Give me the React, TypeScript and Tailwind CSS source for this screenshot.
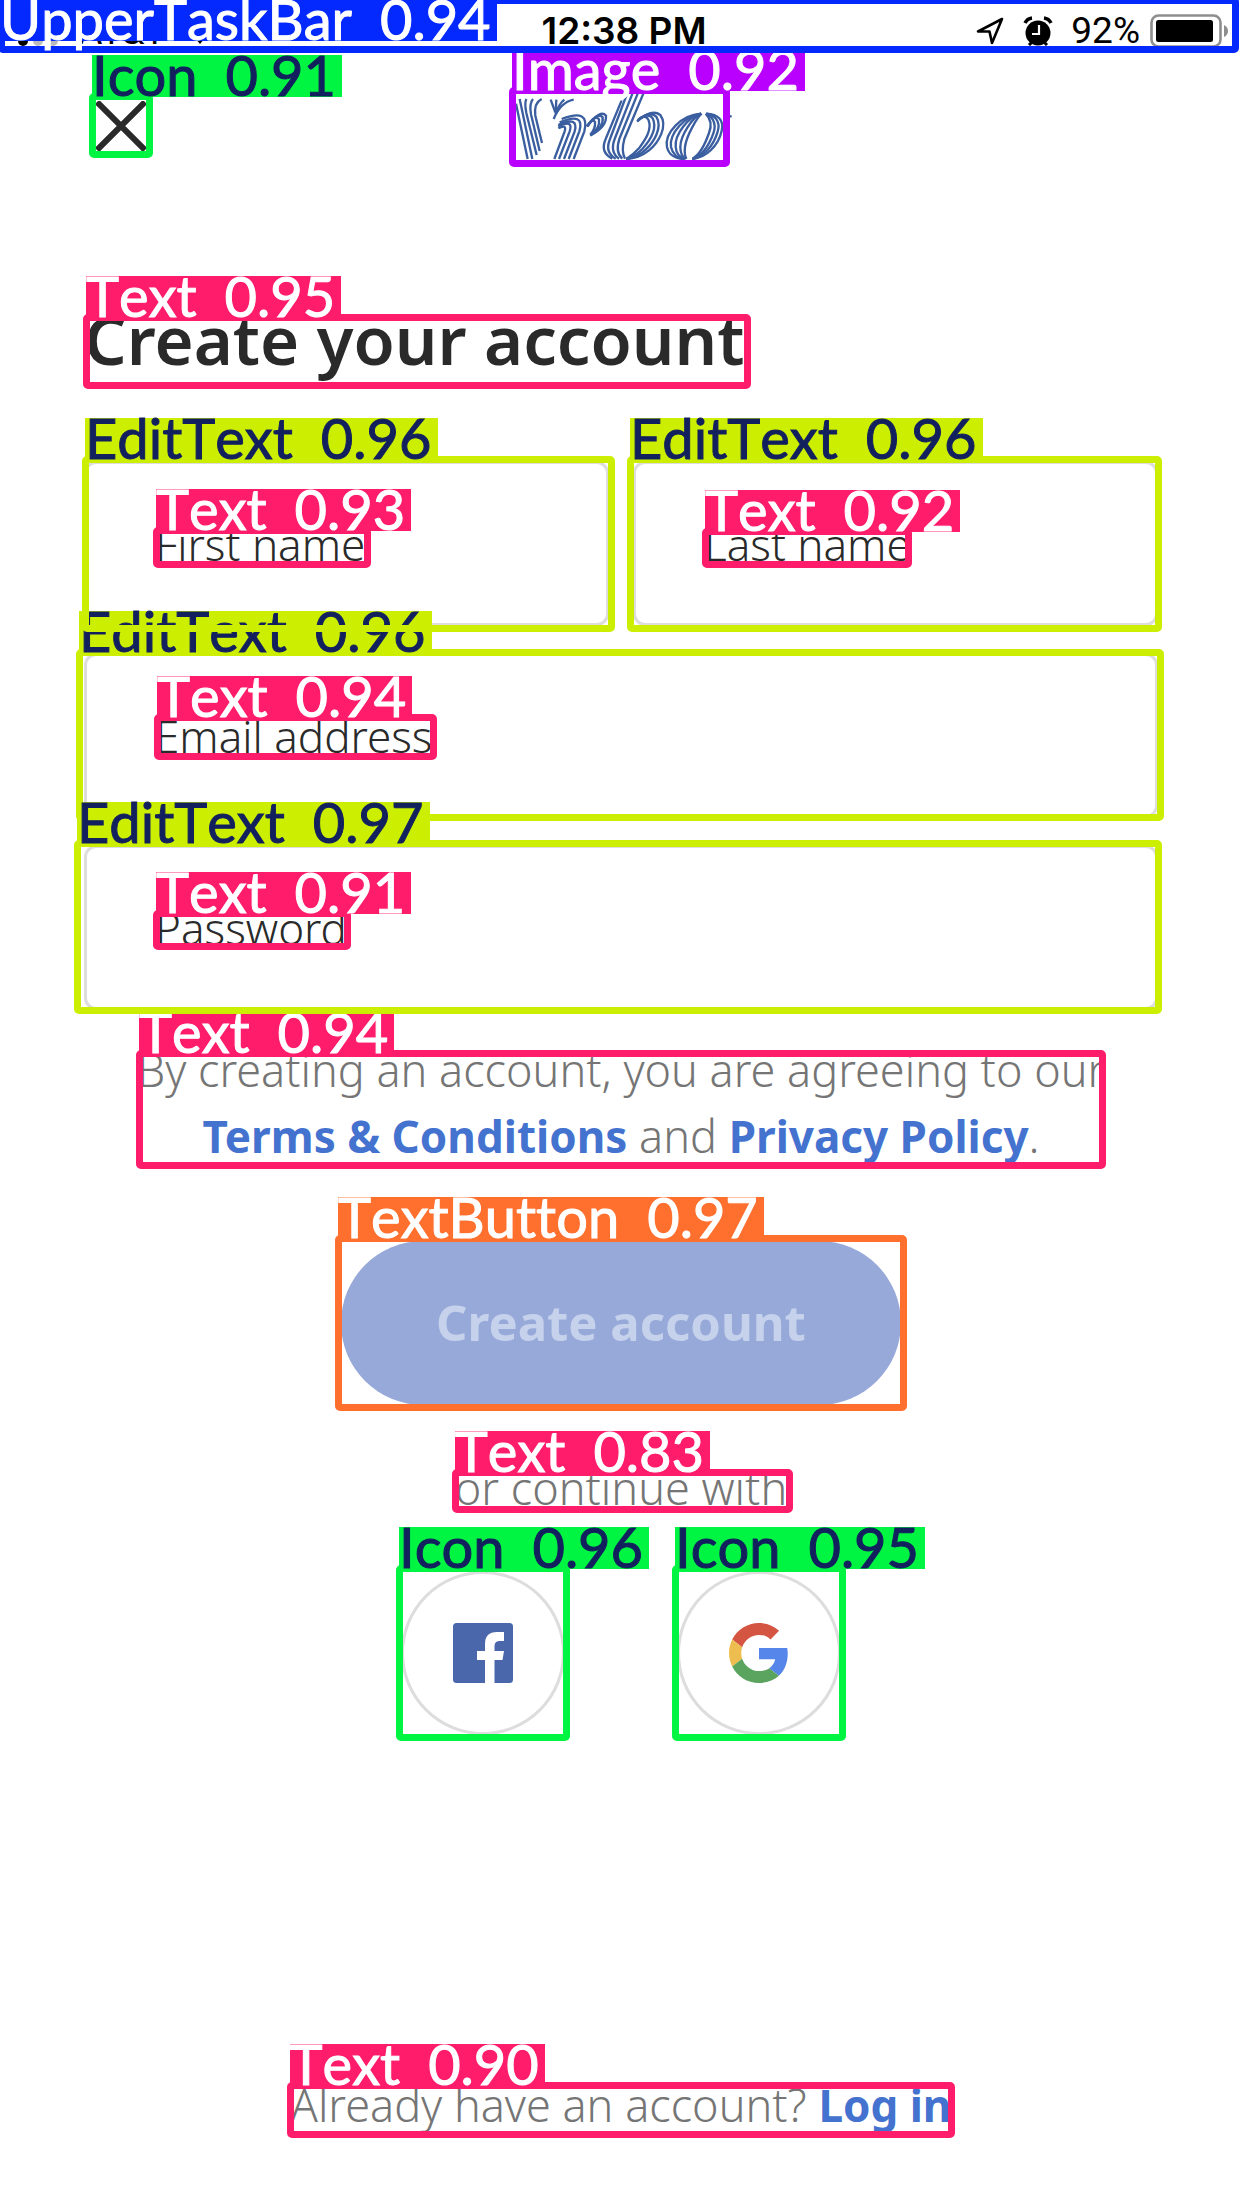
import type { InputHTMLAttributes, ReactNode } from "react";

const tones = {
  blue: { frame: "border-[#0329ff]", label: "bg-[#0329ff] text-white" },
  green: { frame: "border-[#00f442]", label: "bg-[#00f442] text-[#12205e]" },
  purple: { frame: "border-[#b900ff]", label: "bg-[#b900ff] text-white" },
  pink: { frame: "border-[#ff1c6b]", label: "bg-[#ff1c6b] text-white" },
  lime: { frame: "border-[#ccee00]", label: "bg-[#ccee00] text-[#12205e]" },
  orange: { frame: "border-[#ff6f2e]", label: "bg-[#ff6f2e] text-white" },
};

type MarkerProps = {
  kind: string;
  score: string;
  tone: keyof typeof tones;
  className: string;
  labelAt?: string;
};

/* Detection frame with its class name and confidence, laid over the parent element. */
function Marker({ kind, score, tone, className, labelAt = "-left-1 -top-[45px]" }: MarkerProps) {
  return (
    <span className={`pointer-events-none absolute rounded-[5px] border-[7px] ${tones[tone].frame} ${className}`}>
      <span
        className={`absolute flex h-[42px] gap-7 whitespace-nowrap pr-1.5 text-left font-['Lato',sans-serif] text-[56px] font-normal leading-10 [font-kerning:none] [font-variant-ligatures:none] [-webkit-text-stroke:1px_currentColor] ${tones[tone].label} ${labelAt}`}
      >
        <span>{kind}</span>
        <span>{score}</span>
      </span>
    </span>
  );
}

function Field({ children, ...input }: InputHTMLAttributes<HTMLInputElement> & { children: ReactNode }) {
  return (
    <div className="relative">
      <input
        {...input}
        aria-label={input.placeholder}
        className="block h-[165px] w-full rounded-xl border-[3px] border-[#dddddd] bg-white px-[68px] text-[44px] font-[350] text-[#2a2a2a] outline-none placeholder:text-[#2a2a2a] placeholder:opacity-100"
      />
      {children}
    </div>
  );
}

function StatusBar() {
  return (
    <header className="relative flex h-[62px] items-center justify-between pl-[18px] pr-3 font-['Inter',sans-serif] text-[36px] text-black">
      <div className="flex flex-1 items-center gap-4">
        <svg viewBox="0 0 44 12" className="mt-5 h-3 w-11" aria-hidden="true">
          <circle cx="5" cy="6" r="5" fill="#000" />
          <circle cx="20" cy="6" r="5" fill="#bbb" />
          <circle cx="35" cy="6" r="5" fill="#bbb" />
        </svg>
        <span>AT&amp;T</span>
        <svg viewBox="0 0 36 26" className="h-[26px] w-9" aria-hidden="true">
          <path d="M18 26 12 19a9 9 0 0 1 12 0Z" />
          <path d="M7 14a16 16 0 0 1 22 0M2 8a23 23 0 0 1 32 0" fill="none" stroke="#000" strokeWidth="4" />
        </svg>
      </div>
      <time className="text-[37px] font-semibold">12:38 PM</time>
      <div className="flex flex-1 items-center justify-end">
        <svg viewBox="0 0 30 30" className="h-[30px] w-[30px]" aria-hidden="true">
          <path d="M27 3 3 15.500 14.500 15.500 17 27Z" fill="none" stroke="#000" strokeWidth="2.600" strokeLinejoin="round" />
        </svg>
        <svg viewBox="0 0 30 30" className="ml-[18px] h-[30px] w-[30px]" aria-hidden="true">
          <circle cx="15" cy="17" r="12.500" />
          <path d="M2 7a9 9 0 0 1 7-5M28 7a9 9 0 0 0-7-5" fill="none" stroke="#000" strokeWidth="3.500" />
          <path d="M16 9v9H9" fill="none" stroke="#fff" strokeWidth="2.200" />
          <path d="M6 29l4-4M24 29l-4-4" stroke="#000" strokeWidth="3" />
        </svg>
        <span className="ml-[18px] font-['Roboto',sans-serif] text-[37px]">92%</span>
        <svg viewBox="0 0 80 34" className="ml-2.5 h-[34px] w-20" aria-hidden="true">
          <rect x="1.500" y="1.500" width="69" height="31" rx="7" fill="none" stroke="#8e8e8e" strokeWidth="2.600" />
          <rect x="6" y="6" width="57" height="22" rx="2.500" />
          <path d="M74 11q4 2 4 6t-4 6Z" fill="#8e8e8e" />
        </svg>
      </div>
      <Marker
        kind="UpperTaskBar"
        score="0.94"
        tone="blue"
        className="-left-0.5 -top-[3px] bottom-[9px] right-[3px] z-20"
        labelAt="-left-[5px] -top-[5px]"
      />
    </header>
  );
}

const logoStripes = [
  "M33 62 68 228",
  "M44 48 82 228",
  "M64 48Q58 60 64 90L95 216",
  "M84 48Q72 62 78 94L104 204",
  "M110 48Q86 60 91 98L111 180",
  "M137 50 151 88",
  "M154 50 152 90",
  "M178 50Q162 62 152 94",
  "M206 50Q166 58 146 108",
  "M148 228 179 145Q186 122 160 136",
  "M162 228 194 145Q206 108 160 130",
  "M177 228 209 145Q222 98 160 126",
  "M191 228 223 145Q240 86 164 118",
  "M206 228 238 145Q256 74 170 108",
  "M246 130Q286 78 303 98 306 132 256 157",
  "M246 130Q278 86 293 103 297 134 256 157",
  "M246 130Q270 94 282 109 286 136 256 157",
  "M248 130Q262 104 270 117 272 138 256 155",
  "M350 52 302 168Q284 208 322 227",
  "M370 22 315 168Q298 208 332 227",
  "M386 22 329 168Q314 208 342 227",
  "M402 22 343 168Q330 208 352 227",
  "M419 22 358 168Q348 204 360 227",
  "M396 116Q440 76 466 96C490 130 460 180 432 202Q402 226 364 228",
  "M398 112Q434 82 454 101C474 134 446 178 422 200Q398 222 364 228",
  "M400 110Q430 88 443 106C458 138 432 176 412 198Q392 218 364 228",
  "M404 106Q424 94 431 112C442 142 418 174 402 196Q386 214 364 228",
  "M588 92C528 96 478 150 486 192 492 218 510 226 536 228",
  "M588 92C540 98 492 152 498 192 504 218 520 226 538 228",
  "M588 92C552 100 508 154 512 192 514 216 526 224 540 228",
  "M588 92C564 102 526 156 526 192 526 212 532 222 542 228",
  "M590 92C576 104 544 158 540 192 538 210 540 220 544 228",
  "M604 92C640 94 658 112 650 144 640 188 604 224 562 228",
  "M604 92C628 96 648 114 638 146 626 188 596 222 562 228",
  "M604 92C618 98 636 118 626 148 612 190 588 220 562 228",
  "M602 92C610 100 624 120 612 150 598 190 580 218 562 228",
];

function Logo() {
  return (
    <svg viewBox="0 0 696 258" className="h-[86px] w-[232px]" role="img" aria-label="Vrbo">
      <g fill="none" stroke="#3a5e9f" strokeWidth="7">
        {logoStripes.map((d) => (
          <path key={d} d={d} />
        ))}
        <path d="M672 100h8" />
      </g>
    </svg>
  );
}

export default function App() {
  return (
    <div className="flex min-h-screen flex-col overflow-x-hidden bg-white font-['Noto_Sans',sans-serif]">
      <StatusBar />
      <nav className="grid h-32 grid-cols-[1fr_auto_1fr] items-center px-24">
        <button type="button" aria-label="Close" className="relative h-[50px] w-[50px]">
          <svg viewBox="0 0 50 50" className="h-full w-full" aria-hidden="true">
            <path d="M1 1 49 49M49 1 1 49" stroke="#2a2a2a" strokeWidth="6" />
          </svg>
          <Marker kind="Icon" score="0.91" tone="green" className="-left-[7px] -top-2 z-10 h-[65px] w-16" />
        </button>
        <div className="relative">
          <Logo />
          <Marker kind="Image" score="0.92" tone="purple" className="left-1 top-1 z-10 h-20 w-[221px]" />
        </div>
      </nav>

      <main className="px-[84px] pt-[107px]">
        <h1 className="relative text-[67px] font-semibold leading-[84px] text-[#2a2a2a]">
          Create your account
          <Marker kind="Text" score="0.95" tone="pink" className="-left-px top-[17px] h-[75px] w-[668px]" />
        </h1>

        <form className="mt-20 flex flex-col gap-[27px]" onSubmit={(e) => e.preventDefault()}>
          <div className="grid grid-cols-2 gap-6">
            <Field type="text" placeholder="First name">
              <Marker kind="EditText" score="0.96" tone="lime" className="-bottom-1.5 -left-0.5 -right-1.5 -top-[5px] z-20" />
              <Marker kind="Text" score="0.93" tone="pink" className="left-[69px] top-[66px] z-30 h-[41px] w-[218px]" />
            </Field>
            <Field type="text" placeholder="Last name">
              <Marker kind="EditText" score="0.96" tone="lime" className="-bottom-1.5 -left-1.5 -right-1 -top-[5px] z-20" />
              <Marker kind="Text" score="0.92" tone="pink" className="left-[69px] top-[67px] z-30 h-10 w-[210px]" />
            </Field>
          </div>
          <Field type="email" placeholder="Email address">
            <Marker kind="EditText" score="0.96" tone="lime" className="-bottom-[3px] -left-2 -right-1.5 -top-1 z-10" />
            <Marker kind="Text" score="0.94" tone="pink" className="left-[70px] top-[61px] z-30 h-[46px] w-[283px]" />
          </Field>
          <Field type="password" placeholder="Password">
            <Marker kind="EditText" score="0.97" tone="lime" className="-bottom-1 -left-2.5 -right-1 -top-[5px] z-20" />
            <Marker kind="Text" score="0.91" tone="pink" className="left-[69px] top-[65px] z-30 h-10 w-[198px]" />
          </Field>

          <p className="relative text-center text-[45px] font-[350] leading-[66px] text-[#757575]">
            By creating an account, you are agreeing to our
            <br />
            <a href="#terms" className="text-[44px] font-bold text-[#4472cf]">Terms &amp; Conditions</a> and{" "}
            <a href="#privacy" className="text-[44px] font-bold text-[#4472cf]">Privacy Policy</a>.
            <Marker kind="Text" score="0.94" tone="pink" className="bottom-0 left-[52px] right-[52px] top-[13px] z-10" />
          </p>

          <button
            type="submit"
            className="relative mt-[45px] h-[164px] w-[560px] self-center rounded-full bg-[#97a9d9] text-[49px] font-bold text-[#c6d2ec]"
          >
            Create account
            <Marker kind="TextButton" score="0.97" tone="orange" className="-inset-1.5" />
          </button>
        </form>

        <section className="mt-[50px] flex flex-col items-center gap-[50px]">
          <p className="relative text-[45px] font-[350] leading-[66px] text-[#757575]">
            or continue with
            <Marker kind="Text" score="0.83" tone="pink" className="-left-[3px] top-3.5 h-11 w-[341px]" />
          </p>
          <div className="flex gap-28">
            <button type="button" aria-label="Facebook" className="relative flex h-[164px] w-[164px] items-center justify-center rounded-full border-[3px] border-[#dddddd]">
              <svg viewBox="0 0 60 60" className="h-[60px] w-[60px]" aria-hidden="true">
                <rect width="60" height="60" rx="3.500" fill="#4a67ab" />
                <path d="M32 60V37H24V28H32V21Q32 9 44 9H51V18H47Q41.500 18 41.500 23V28H51L49.500 37H41.500V60Z" fill="#fff" />
              </svg>
              <Marker kind="Icon" score="0.96" tone="green" className="-inset-x-2 -inset-y-[9px]" />
            </button>
            <button type="button" aria-label="Google" className="relative flex h-[164px] w-[164px] items-center justify-center rounded-full border-[3px] border-[#dddddd]">
              <svg viewBox="0 0 48 48" className="h-[60px] w-[60px]" aria-hidden="true">
                <path fill="#d55543" d="M24 9.500c3.540 0 6.710 1.220 9.210 3.600l6.850-6.850C35.900 2.380 30.470 0 24 0 14.620 0 6.510 5.380 2.560 13.220l7.980 6.190C12.430 13.720 17.740 9.500 24 9.500z" />
                <path fill="#5686ea" d="M46.980 24.550c0-1.570-.15-3.090-.38-4.550H24v9.020h12.940c-.58 2.960-2.260 5.480-4.780 7.180l7.730 6c4.510-4.180 7.090-10.360 7.090-17.650z" />
                <path fill="#eebd4f" d="M10.530 28.590c-.48-1.450-.76-2.990-.76-4.590s.27-3.140.76-4.590l-7.980-6.190C.92 16.460 0 20.120 0 24c0 3.880.92 7.540 2.560 10.780l7.970-6.190z" />
                <path fill="#5aa45f" d="M24 48c6.480 0 11.930-2.130 15.890-5.810l-7.730-6c-2.150 1.450-4.920 2.300-8.160 2.300-6.260 0-11.570-4.220-13.470-9.910l-7.980 6.190C6.510 42.620 14.620 48 24 48z" />
              </svg>
              <Marker kind="Icon" score="0.95" tone="green" className="-inset-x-2 -inset-y-[9px]" />
            </button>
          </div>
        </section>
      </main>

      <footer className="mt-auto flex justify-center pb-[70px]">
        <p className="relative text-[45px] font-[350] leading-[66px] text-[#757575]">
          Already have an account? <a href="#login" className="text-[44px] font-bold text-[#4472cf]">Log in</a>
          <Marker kind="Text" score="0.90" tone="pink" className="-inset-x-1 bottom-0 top-2.5" />
        </p>
      </footer>
    </div>
  );
}
